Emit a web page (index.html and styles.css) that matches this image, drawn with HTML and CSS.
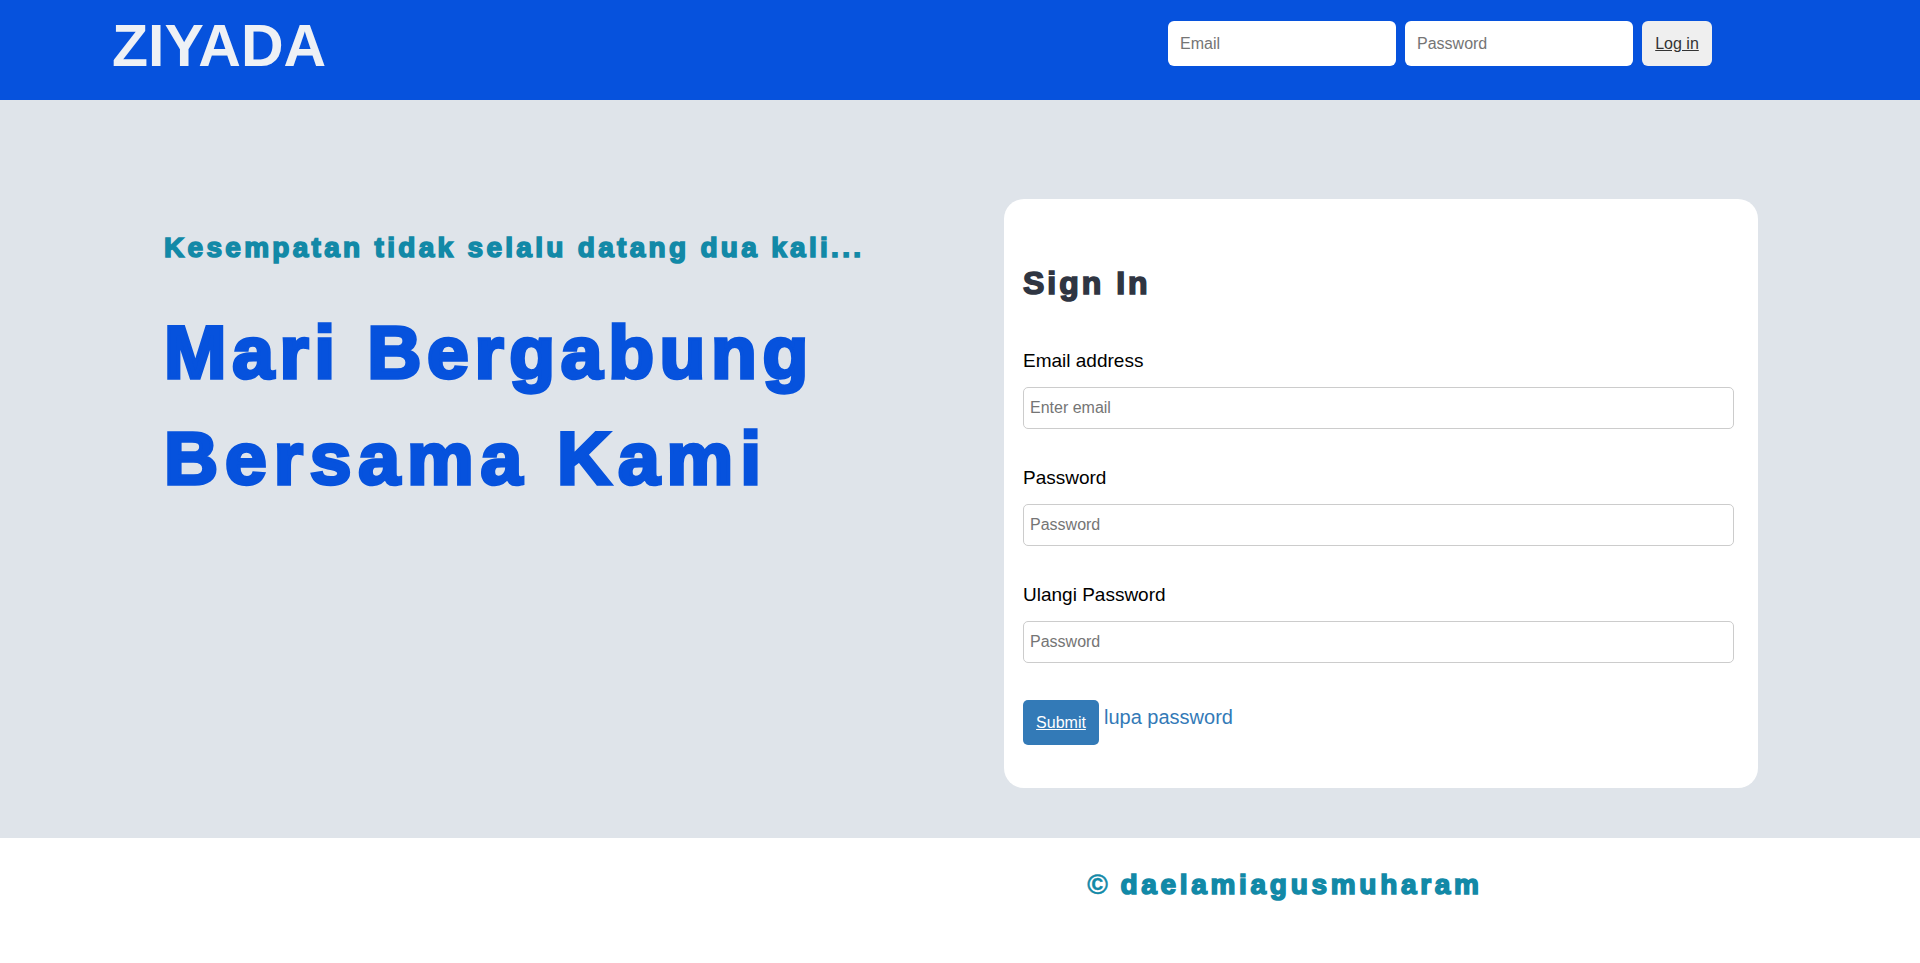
FILE: index.html
```html
<!DOCTYPE html>
<html lang="id">
<head>
<meta charset="utf-8">
<title>ZIYADA</title>
<link rel="stylesheet" href="styles.css">
</head>
<body>
<header class="topbar">
  <div class="brand">ZIYADA</div>
  <form class="login-form">
    <input class="top-input" type="email" placeholder="Email">
    <input class="top-input" type="password" placeholder="Password">
    <button class="top-btn" type="button"><span class="u">Log in</span></button>
  </form>
</header>
<main class="hero">
  <section class="hero-text">
    <h3 class="tagline">Kesempatan tidak selalu datang dua kali...</h3>
    <h1 class="headline"><span class="line1">Mari Bergabung</span><br><span class="line2">Bersama Kami</span></h1>
  </section>
  <section class="card">
    <h2 class="card-title">Sign In</h2>
    <div class="group">
      <label class="label">Email address</label>
      <input class="field" type="email" placeholder="Enter email">
    </div>
    <div class="group">
      <label class="label">Password</label>
      <input class="field" type="password" placeholder="Password">
    </div>
    <div class="group last">
      <label class="label">Ulangi Password</label>
      <input class="field" type="password" placeholder="Password">
    </div>
    <div class="actions">
      <button class="submit" type="button"><span class="u">Submit</span></button>
      <a class="forgot" href="#">lupa password</a>
    </div>
  </section>
</main>
<footer class="footer">
  <p class="copy"><span class="copy-sign">©</span> daelamiagusmuharam</p>
</footer>
</body>
</html>
```

FILE: styles.css
```css
* { box-sizing: border-box; }
html, body { margin: 0; padding: 0; }
body {
  font-family: "Liberation Sans", Arial, sans-serif;
  background: #ffffff;
  width: 1920px;
  height: 963px;
  overflow: hidden;
}

.topbar {
  height: 100px;
  background: #0652dd;
  display: flex;
  justify-content: space-between;
  align-items: flex-start;
  padding: 0 208px 0 112px;
}
.brand {
  margin-top: 13px;
  font-size: 59px;
  line-height: 66px;
  font-weight: 700;
  color: #eef1f5;
}
.login-form {
  margin-top: 21px;
  display: flex;
  gap: 9px;
}
.top-input {
  width: 228px;
  height: 45px;
  border: none;
  border-radius: 6px;
  background: #fff;
  padding: 0 12px;
  font-family: "Liberation Sans", Arial, sans-serif;
  font-size: 16px;
  color: #333;
}
.top-input::placeholder { color: #757575; }
.top-btn {
  width: 70px;
  height: 45px;
  border: none;
  border-radius: 6px;
  background: #efefef;
  font-family: "Liberation Sans", Arial, sans-serif;
  font-size: 16px;
  color: #333;
  padding: 0;
}
.u { text-decoration: underline; }

.hero {
  height: 738px;
  background: #dfe4ea;
  display: flex;
  padding: 99px 162px 0 164px;
}
.hero-text {
  flex: 1;
  padding-top: 33px;
}
.tagline {
  margin: 0;
  font-size: 28px;
  line-height: 32px;
  font-weight: 700;
  color: #1289a7;
  letter-spacing: 3.3px;
  -webkit-text-stroke: 1.6px #1289a7;
}
.headline {
  margin: 35px 0 0;
  font-size: 75px;
  line-height: 106px;
  font-weight: 700;
  color: #0652dd;
  -webkit-text-stroke: 3.5px #0652dd;
}
.line1 { letter-spacing: 5.65px; }
.line2 { letter-spacing: 6.9px; }

.card {
  width: 754px;
  height: 589px;
  background: #fff;
  border-radius: 20px;
  padding: 65px 24px 0 19px;
}
.card-title {
  margin: 0 0 48px;
  font-size: 32px;
  line-height: 38px;
  font-weight: 700;
  color: #2f3542;
  letter-spacing: 3px;
  -webkit-text-stroke: 1.6px #2f3542;
}
.group {
  display: flex;
  flex-direction: column;
  margin-bottom: 38px;
}
.group.last { margin-bottom: 37px; }
.label {
  font-size: 19px;
  line-height: 22px;
  color: #000;
  margin-bottom: 15px;
}
.field {
  width: 100%;
  height: 42px;
  border: 1px solid #cccccc;
  border-radius: 5px;
  padding: 0 6px;
  font-family: "Liberation Sans", Arial, sans-serif;
  font-size: 16px;
  color: #333;
  background: #fff;
}
.field::placeholder { color: #757575; }
.actions {
  display: flex;
  align-items: flex-start;
  gap: 5px;
}
.submit {
  width: 76px;
  height: 45px;
  border: none;
  border-radius: 5px;
  background: #337ab7;
  color: #fff;
  font-family: "Liberation Sans", Arial, sans-serif;
  font-size: 16px;
  padding: 0;
}
.forgot {
  margin-top: 6px;
  font-size: 20px;
  line-height: 23px;
  color: #337ab7;
  text-decoration: none;
}

.footer {
  height: 125px;
  background: #fff;
  display: flex;
  justify-content: center;
  padding: 31px 0 0 650px;
}
.copy {
  margin: 0;
  font-size: 28px;
  line-height: 32px;
  font-weight: 700;
  color: #1289a7;
  letter-spacing: 3.7px;
  -webkit-text-stroke: 1.6px #1289a7;
}
.copy-sign {
  -webkit-text-stroke: 0.5px #1289a7;
  font-weight: 700;
  letter-spacing: 1px;
}
```
